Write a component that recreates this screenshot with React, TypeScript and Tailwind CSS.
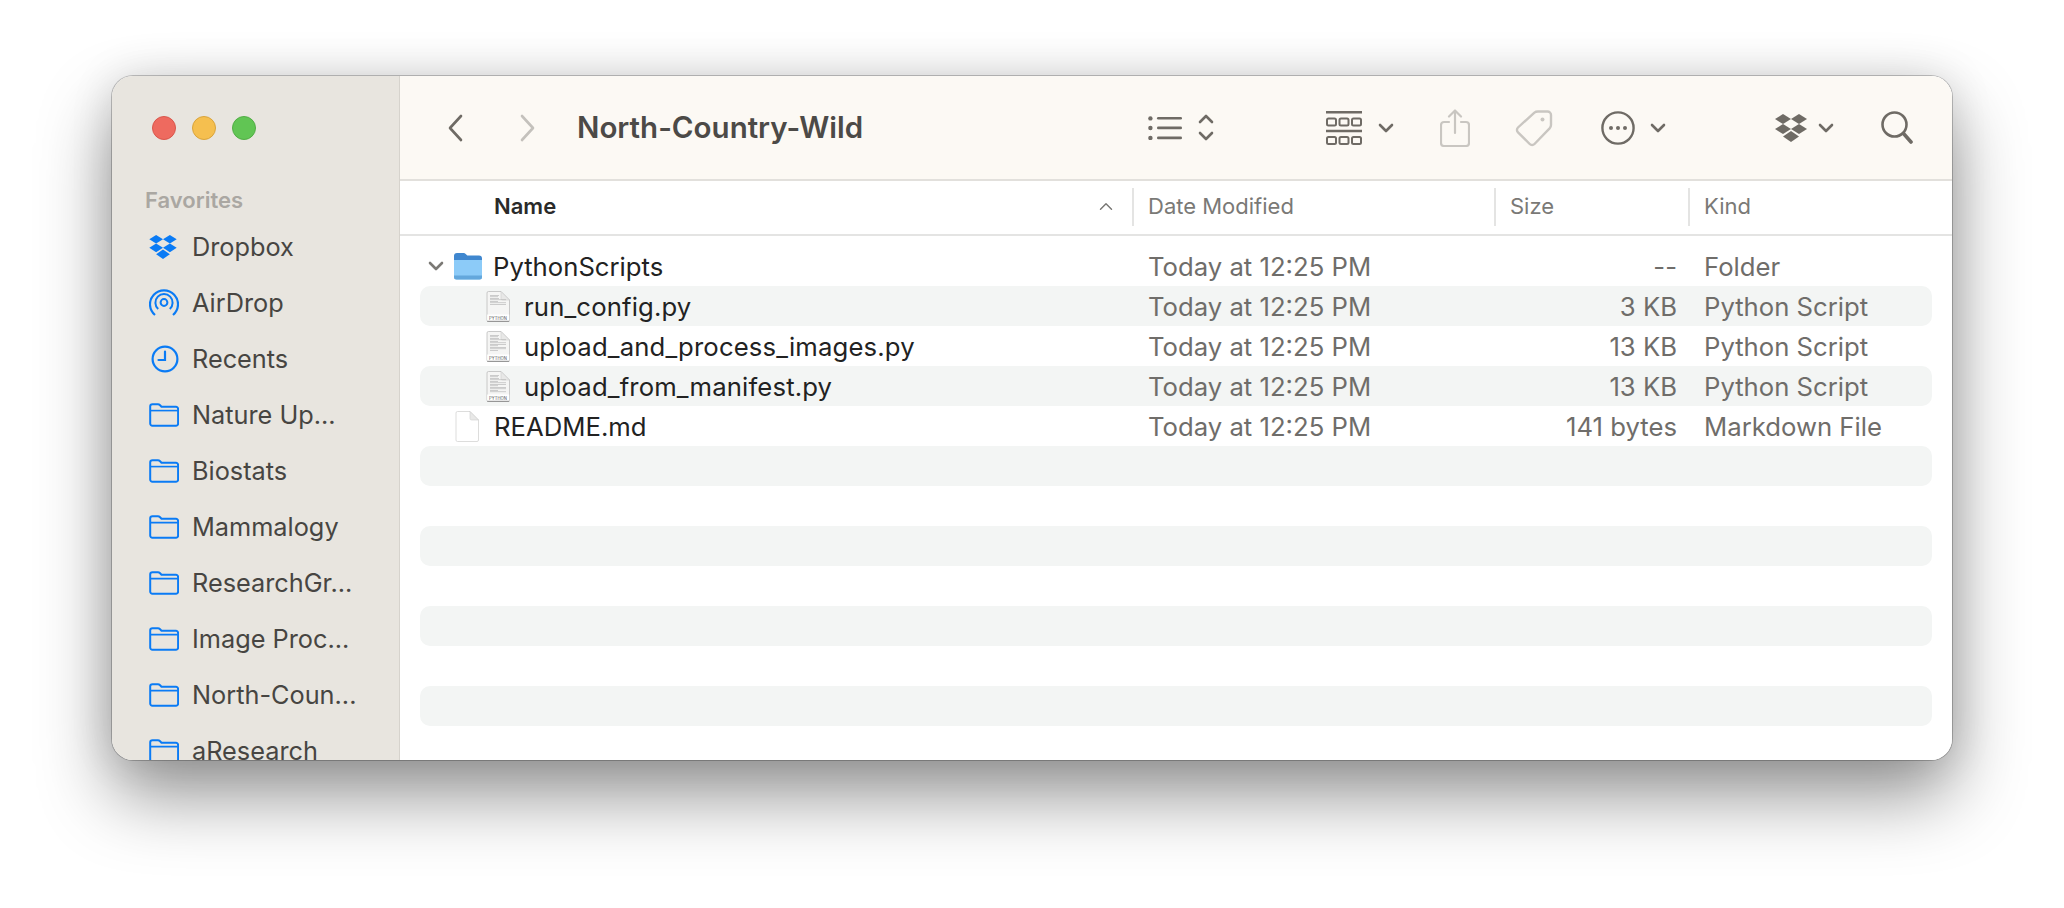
const sidebarFolders = ['Nature Up...', 'Biostats', 'Mammalogy', 'ResearchGr...', 'Image Proc...', 'North-Coun...', 'aResearch'];

const files = [
  { name: 'PythonScripts', size: '--', kind: 'Folder', type: 'folder' },
  { name: 'run_config.py', size: '3 KB', kind: 'Python Script', type: 'python', lines: 7 },
  { name: 'upload_and_process_images.py', size: '13 KB', kind: 'Python Script', type: 'python', lines: 11 },
  { name: 'upload_from_manifest.py', size: '13 KB', kind: 'Python Script', type: 'python', lines: 12 },
  { name: 'README.md', size: '141 bytes', kind: 'Markdown File', type: 'doc' },
];

const DropboxIcon = ({ className, color }: { className: string; color: string }) => (
  <svg viewBox="0 0 32 28" className={className} fill={color}>
    <polygon points="8,0 16,5 8,10 0,5" />
    <polygon points="24,0 32,5 24,10 16,5" />
    <polygon points="8,10 16,15 8,20 0,15" />
    <polygon points="24,10 32,15 24,20 16,15" />
    <polygon points="16,17 24,22.5 16,28 8,22.5" />
  </svg>
);

const AirDropIcon = () => (
  <svg viewBox="0 0 30 30" className="w-[30px] h-[30px]" fill="none" stroke="#0a7bf5" strokeWidth="2">
    <circle cx="15" cy="14.5" r="3.4" />
    <path d="M9.2 21a8.6 8.6 0 1 1 11.6 0" />
    <path d="M6 27a14 14 0 1 1 18 0" strokeWidth="2.2" />
  </svg>
);

const ClockIcon = () => (
  <svg viewBox="0 0 28 28" className="w-[28px] h-[28px]" fill="none" stroke="#0a7bf5" strokeWidth="2.2" strokeLinecap="round">
    <circle cx="14" cy="14" r="12.4" />
    <path d="M14 6.5V15H7.5" />
  </svg>
);

const FolderOutline = () => (
  <svg viewBox="0 0 30 24" className="w-[30px] h-[24px]" fill="none" stroke="#0a7bf5" strokeWidth="2" strokeLinejoin="round">
    <path d="M1.2 20V3.5A2.3 2.3 0 0 1 3.5 1.2h5.4c1 0 1.6.4 2.2 1l1.4 1.5h14.4a2.2 2.2 0 0 1 2.2 2.2V20.6a2.2 2.2 0 0 1-2.2 2.2H3.4A2.2 2.2 0 0 1 1.2 20.6z" />
    <path d="M1.2 7.6h27.6" strokeWidth="1.6" />
  </svg>
);

const Chevron = ({ className, dir, color, width = 2.6 }: { className: string; dir: 'left' | 'right' | 'down' | 'up'; color: string; width?: number }) => {
  const paths = {
    left: 'M14 2 3 14l11 12',
    right: 'M2 2l11 12L2 26',
    down: 'M2 3l6 6 6-6',
    up: 'M2 9l6-6 6 6',
  };
  const box = dir === 'left' || dir === 'right' ? '0 0 16 28' : '0 0 16 12';
  return (
    <svg viewBox={box} className={className} fill="none" stroke={color} strokeWidth={width} strokeLinecap="round" strokeLinejoin="round">
      <path d={paths[dir]} />
    </svg>
  );
};

const ListIcon = () => (
  <svg viewBox="0 0 34 24" className="w-[34px] h-[24px]" fill="#6f6b65">
    <circle cx="2.4" cy="2.4" r="2.2" />
    <circle cx="2.4" cy="12" r="2.2" />
    <circle cx="2.4" cy="22" r="2.2" />
    <rect x="9" y="1" width="25" height="2.6" rx="1.3" />
    <rect x="9" y="10.6" width="25" height="2.6" rx="1.3" />
    <rect x="9" y="20.6" width="25" height="2.6" rx="1.3" />
  </svg>
);

const GalleryIcon = () => (
  <svg viewBox="0 0 36 34" className="w-[36px] h-[34px]" fill="none" stroke="#6f6b65" strokeWidth="2">
    <path d="M0 1.2h36M0 20h36" strokeWidth="2.4" />
    <rect x="1" y="7.5" width="9" height="7" rx="1.5" />
    <rect x="13.5" y="7.5" width="9" height="7" rx="1.5" />
    <rect x="26" y="7.5" width="9" height="7" rx="1.5" />
    <rect x="1" y="26" width="9" height="7" rx="1.5" />
    <rect x="13.5" y="26" width="9" height="7" rx="1.5" />
    <rect x="26" y="26" width="9" height="7" rx="1.5" />
  </svg>
);

const ShareIcon = () => (
  <svg viewBox="0 0 30 38" className="w-[30px] h-[38px]" fill="none" stroke="#c9c6c1" strokeWidth="2.2" strokeLinecap="round" strokeLinejoin="round">
    <path d="M9 13H4a3 3 0 0 0-3 3v18a3 3 0 0 0 3 3h22a3 3 0 0 0 3-3V16a3 3 0 0 0-3-3h-5" />
    <path d="M15 24V2M9 7.5 15 1.5l6 6" />
  </svg>
);

const TagIcon = () => (
  <svg viewBox="0 0 38 38" className="w-[38px] h-[38px]" fill="none" stroke="#c9c6c1" strokeWidth="2.4" strokeLinejoin="round">
    <path d="M23 2.5h9.5a3.5 3.5 0 0 1 3.5 3.5v10c0 1.4-.5 2.4-1.4 3.4L19.5 35a3.3 3.3 0 0 1-4.8 0L3 23.3a3.3 3.3 0 0 1 0-4.8L19.4 3.6c1-.8 2.2-1.1 3.6-1.1z" />
    <circle cx="27.5" cy="10.5" r="2" fill="#c9c6c1" stroke="none" />
  </svg>
);

const MoreIcon = () => (
  <svg viewBox="0 0 34 34" className="w-[34px] h-[34px]" fill="none" stroke="#6f6b65" strokeWidth="2.4">
    <circle cx="17" cy="17" r="15.6" />
    <circle cx="10" cy="17" r="2" fill="#6f6b65" stroke="none" />
    <circle cx="17" cy="17" r="2" fill="#6f6b65" stroke="none" />
    <circle cx="24" cy="17" r="2" fill="#6f6b65" stroke="none" />
  </svg>
);

const SearchIcon = () => (
  <svg viewBox="0 0 32 33" className="w-[32px] h-[33px]" fill="none" stroke="#6f6b65" strokeLinecap="round">
    <circle cx="13.5" cy="13.5" r="12" strokeWidth="2.6" />
    <path d="M22.5 22.5 30 31" strokeWidth="3.6" />
  </svg>
);

const FileIcon = ({ type, lines = 0 }: { type: string; lines?: number }) => {
  if (type === 'folder') {
    return (
      <svg viewBox="0 0 30 28" className="w-[30px] h-[28px]">
        <path d="M1 4a3 3 0 0 1 3-3h6.5c1 0 1.6.4 2.2 1l1.6 1.6H26a3 3 0 0 1 3 3V10H1z" fill="#3f87cf" />
        <path d="M1 8h28v17a2.5 2.5 0 0 1-2.5 2.5h-23A2.5 2.5 0 0 1 1 25z" fill="#8ccbf8" />
        <path d="M1 23.5h28V25a2.5 2.5 0 0 1-2.5 2.5h-23A2.5 2.5 0 0 1 1 25z" fill="#63a7dc" />
      </svg>
    );
  }
  const isPython = type === 'python';
  return (
    <svg viewBox="0 0 24 31" className="w-[24px] h-[31px]">
      <path d="M1 2a1.5 1.5 0 0 1 1.5-1.5H15L23.5 9v20a1.5 1.5 0 0 1-1.5 1.5H2.5A1.5 1.5 0 0 1 1 29z" fill={isPython ? '#f5f5f4' : '#fff'} stroke={isPython ? '#bdbdbc' : '#d4d4d3'} strokeWidth="0.8" />
      <path d="M15 .5V7.5a1.5 1.5 0 0 0 1.5 1.5h7z" fill="#e8e8e7" stroke="#cfcfce" strokeWidth="0.6" />
      {isPython && Array.from({ length: lines }).map((_, i) => (
        <rect key={i} x="4" y={4 + i * 1.5} width={i % 3 === 1 ? 8 : i < 3 ? 9 : 16} height="0.6" fill="#b0b0b0" />
      ))}
      {isPython && (
        <>
          <rect x="1.2" y="23.5" width="22" height="6.3" fill="#fff" />
          <text x="12" y="28.5" fontSize="4.2" textAnchor="middle" fill="#555" fontFamily="Inter, sans-serif">PYTHON</text>
          <rect x="1.2" y="29.8" width="22" height="1" fill="#8a8a8a" />
        </>
      )}
    </svg>
  );
};

const Separator = () => <div className="w-[2px] h-[38px] bg-[#e4e4e3] shrink-0" />;

export default function App() {
  return (
    <div className="min-h-[908px] bg-white pt-[76px] pl-[112px] overflow-hidden font-['Inter',sans-serif]">
      <div className="w-[1840px] h-[684px] flex rounded-[21px] overflow-hidden shadow-[0_0_0_1px_rgba(0,0,0,0.22),0_36px_72px_rgba(0,0,0,0.42),0_0_44px_rgba(0,0,0,0.12)]">
        <aside className="w-[288px] shrink-0 bg-[#e8e5df] border-r border-[#d6d3cd] overflow-hidden">
          <div className="flex gap-[16px] pl-[40px] pt-[40px]">
            <span className="w-[24px] h-[24px] rounded-full bg-[#ee6a5f] border border-[#d9574c]" />
            <span className="w-[24px] h-[24px] rounded-full bg-[#f5bf4f] border border-[#d9a43c]" />
            <span className="w-[24px] h-[24px] rounded-full bg-[#61c554] border border-[#52ad46]" />
          </div>
          <div className="mt-[46px] pl-[33px] text-[22px] leading-[28px] font-semibold text-[#aaa7a2]">Favorites</div>
          <nav className="mt-[5px] text-[25.3px] text-[#474542]">
            <div className="flex items-center h-[56px]">
              <div className="w-[80px] pl-[37px] shrink-0"><DropboxIcon className="w-[28px] h-[24px]" color="#0a7bf5" /></div>
              Dropbox
            </div>
            <div className="flex items-center h-[56px]">
              <div className="w-[80px] pl-[37px] shrink-0"><AirDropIcon /></div>
              AirDrop
            </div>
            <div className="flex items-center h-[56px]">
              <div className="w-[80px] pl-[39px] shrink-0"><ClockIcon /></div>
              Recents
            </div>
            {sidebarFolders.map((folder) => (
              <div key={folder} className="flex items-center h-[56px]">
                <div className="w-[80px] pl-[37px] shrink-0"><FolderOutline /></div>
                {folder}
              </div>
            ))}
          </nav>
        </aside>

        <main className="flex-1 bg-white overflow-hidden">
          <header className="h-[105px] bg-[#fcf9f4] border-b-2 border-[#e2e0dc] flex items-center">
            <Chevron className="ml-[47px] w-[16px] h-[28px]" dir="left" color="#6f6b65" />
            <Chevron className="ml-[57px] w-[16px] h-[28px]" dir="right" color="#c4c1bc" />
            <h1 className="ml-[41px] w-[571px] text-[29.5px] font-semibold text-[#4c4a47] whitespace-nowrap">North-Country-Wild</h1>
            <ListIcon />
            <div className="ml-[16px] flex flex-col gap-[5px]">
              <Chevron className="w-[16px] h-[12px]" dir="up" color="#6f6b65" />
              <Chevron className="w-[16px] h-[12px]" dir="down" color="#6f6b65" />
            </div>
            <div className="ml-[112px]"><GalleryIcon /></div>
            <Chevron className="ml-[16px] w-[16px] h-[12px]" dir="down" color="#6f6b65" />
            <div className="ml-[46px]"><ShareIcon /></div>
            <div className="ml-[45px]"><TagIcon /></div>
            <div className="ml-[48px]"><MoreIcon /></div>
            <Chevron className="ml-[15px] w-[16px] h-[12px]" dir="down" color="#6f6b65" />
            <DropboxIcon className="ml-[109px] w-[32px] h-[28px]" color="#6f6b65" />
            <Chevron className="ml-[11px] w-[16px] h-[12px]" dir="down" color="#6f6b65" />
            <div className="ml-[47px]"><SearchIcon /></div>
          </header>

          <div className="h-[55px] pb-[2px] border-b-2 border-[#e4e4e3] flex items-center text-[22px] text-[#7a7976]">
            <div className="w-[732px] pl-[94px] flex items-center justify-between pr-[17px] font-semibold text-[#2a2a2a]">
              <span>Name</span>
              <Chevron className="w-[18px] h-[11px]" dir="up" color="#7a7976" width={1.6} />
            </div>
            <Separator />
            <div className="w-[360px] pl-[14px]">Date Modified</div>
            <Separator />
            <div className="w-[192px] pl-[14px]">Size</div>
            <Separator />
            <div className="pl-[14px]">Kind</div>
          </div>

          <div className="pt-[10px] mx-[20px] text-[25.7px] text-[#222]">
            {files.map((file, i) => (
              <div key={file.name} className={`h-[40px] flex items-center rounded-[10px] ${i % 2 === 1 ? 'bg-[#f3f5f4]' : ''}`}>
                <div className={`w-[713px] flex items-center ${file.type === 'python' ? 'pl-[66px]' : file.type === 'doc' ? 'pl-[35px]' : 'pl-[33px]'}`}>
                  {file.type === 'folder' && (
                    <Chevron className="absolute ml-[-25px] w-[16px] h-[12px]" dir="down" color="#7b7975" />
                  )}
                  <FileIcon type={file.type} lines={file.lines} />
                  <span className={`pt-[2px] ${file.type === 'python' ? 'ml-[14px] tracking-[0.14px]' : file.type === 'doc' ? 'ml-[15px]' : 'ml-[10px]'}`}>{file.name}</span>
                </div>
                <div className="w-[362px] pt-[2px] pl-[15px] text-[#6f6d6a]">Today at 12:25 PM</div>
                <div className="w-[194px] pt-[2px] pr-[12px] text-right text-[#6f6d6a]">{file.size}</div>
                <div className="pt-[2px] pl-[15px] text-[#6f6d6a]">{file.kind}</div>
              </div>
            ))}
            {[0, 1, 2, 3, 4, 5, 6].map((n) => (
              <div key={n} className={`h-[40px] rounded-[10px] ${n % 2 === 0 ? 'bg-[#f3f5f4]' : ''}`} />
            ))}
          </div>
        </main>
      </div>
    </div>
  );
}
